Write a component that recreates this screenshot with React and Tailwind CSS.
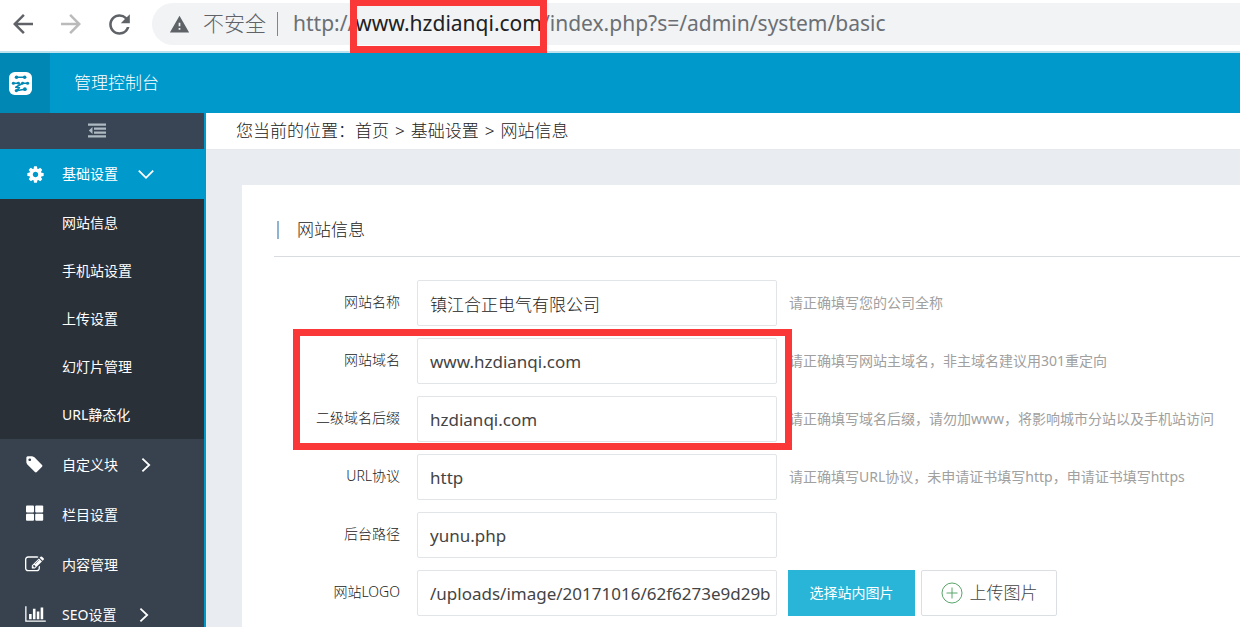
import { useState } from 'react'
import { MdArrowBack, MdArrowForward, MdRefresh, MdWarning } from 'react-icons/md'

const SUB_MENU = ['网站信息', '手机站设置', '上传设置', '幻灯片管理', 'URL静态化']

const MENU = [
  { label: '自定义块', icon: TagIcon,   more: true },
  { label: '栏目设置', icon: GridIcon,  more: false },
  { label: '内容管理', icon: EditIcon,  more: false },
  { label: 'SEO设置',  icon: ChartIcon, more: true },
]

const CRUMBS = ['首页', '基础设置', '网站信息']

function CogIcon() {
  return (
    <svg className="h-[19px] w-[19px]" viewBox="0 0 1792 1792" fill="currentColor">
      <path d="M1152 896q0-106-75-181t-181-75-181 75-75 181 75 181 181 75 181-75 75-181zm512-109v222q0 12-8 23t-20 13l-185 28q-19 54-39 91 35 50 107 138 10 12 10 25t-9 23q-27 37-99 108t-94 71q-12 0-26-9l-138-108q-44 23-91 38-16 136-29 186-7 28-36 28h-222q-14 0-24.5-8.5t-11.5-21.5l-28-184q-49-16-90-37l-141 107q-10 9-25 9-14 0-25-11-126-114-165-168-7-10-7-23 0-12 8-23 15-21 51-66.5t54-70.5q-27-50-41-99l-183-27q-13-2-21-12.5t-8-23.5v-222q0-12 8-23t19-13l186-28q14-46 39-92-40-57-107-138-10-12-10-24 0-10 9-23 26-36 98.5-107.5t94.5-71.5q13 0 26 10l138 107q44-23 91-38 16-136 29-186 7-28 36-28h222q14 0 24.5 8.5t11.5 21.5l28 184q49 16 90 37l142-107q9-9 24-9 13 0 25 10 129 119 165 170 7 8 7 22 0 12-8 23-15 21-51 66.5t-54 70.5q26 50 41 98l183 28q13 2 21 12.5t8 23.5z"/>
    </svg>
  )
}

function TagIcon() {
  return (
    <svg className="h-[19px] w-[19px]" viewBox="0 0 1792 1792" fill="currentColor">
      <path d="M576 448q0-53-37.5-90.5t-90.5-37.5-90.5 37.5-37.5 90.5 37.5 90.5 90.5 37.5 90.5-37.5 37.5-90.5zm1067 576q0 53-37 90l-491 492q-39 37-91 37-53 0-90-37l-715-716q-38-37-64.5-101t-26.5-117v-416q0-52 38-90t90-38h416q53 0 117 26.5t102 64.5l715 714q37 39 37 91z"/>
    </svg>
  )
}

function GridIcon() {
  return (
    <svg className="h-[19px] w-[19px]" viewBox="0 0 19 19" fill="currentColor">
      <rect x="1" y="0.5" width="8" height="7" rx="1"/>
      <rect x="10.2" y="0.5" width="8" height="7" rx="1"/>
      <rect x="1" y="8.7" width="8" height="7" rx="1"/>
      <rect x="10.2" y="8.7" width="8" height="7" rx="1"/>
    </svg>
  )
}

function EditIcon() {
  return (
    <svg className="h-[19px] w-[19px]" viewBox="0 0 1792 1792" fill="currentColor">
      <path d="M888 1184l116-116-152-152-116 116v56h96v96h56zm440-720q-16-16-33 1l-350 350q-17 17-1 33t33-1l350-350q17-17 1-33zm80 594v190q0 119-84.5 203.5t-203.5 84.5h-832q-119 0-203.5-84.5t-84.5-203.5v-832q0-119 84.5-203.5t203.5-84.5h832q63 0 117 25 15 7 18 23 3 17-9 29l-49 49q-14 14-32 8-23-6-45-6h-832q-66 0-113 47t-47 113v832q0 66 47 113t113 47h832q66 0 113-47t47-113v-126q0-13 9-22l64-64q15-15 35-7t20 29zm-96-738l288 288-672 672h-288v-288zm444 132l-92 92-288-288 92-92q28-28 68-28t68 28l152 152q28 28 28 68t-28 68z"/>
    </svg>
  )
}

function ChartIcon() {
  return (
    <svg className="h-[18px] w-[21px]" viewBox="0 0 2048 1792" fill="currentColor">
      <path d="M640 896v512h-256v-512h256zm384-512v1024h-256v-1024h256zm1024 1152v128h-2048v-1536h128v1408h1920zm-640-896v768h-256v-768h256zm384-384v1152h-256v-1152h256z"/>
    </svg>
  )
}

function OutdentIcon() {
  return (
    <svg className="h-[15px] w-[18px]" viewBox="0 0 18 15" fill="currentColor">
      <path d="M0 0.5h18v2.3H0zM6 4.4h12v2.3H6zM6 8.4h12v2.3H6zM0 12.3h18v2.3H0zM4.5 4v7L0.8 7.5z"/>
    </svg>
  )
}

function LogoIcon() {
  return (
    <svg className="h-[23px] w-[23px]" viewBox="0 0 22 22">
      <rect width="22" height="22" rx="5.5" fill="#fff"/>
      <g fill="none" stroke="#0087b4" strokeWidth="1.5" strokeLinecap="round" strokeLinejoin="round">
        <path d="M7 5h8M4 10.8h5.5M13 10.8h5M13 10.8L6.5 14.6M6.5 14.6L10 15L7 18L15 16.4"/>
      </g>
      <g fill="#0087b4">
        <circle cx="7.2" cy="5" r="1.7"/>
        <circle cx="15" cy="5" r="1.7"/>
        <circle cx="4.2" cy="10.8" r="1.5"/>
        <circle cx="9" cy="10.8" r="1.4"/>
        <circle cx="13" cy="10.8" r="1.4"/>
        <circle cx="17.8" cy="10.8" r="1.5"/>
        <circle cx="7" cy="17.8" r="1.5"/>
        <circle cx="15.2" cy="16.4" r="1.8"/>
      </g>
    </svg>
  )
}

function Chevron({ open }) {
  return (
    <svg className="h-4 w-4" viewBox="0 0 16 16" fill="none" stroke="currentColor" strokeWidth="1.8">
      <path d={open ? 'M0.8 4.6L8 11.8L15.2 4.6' : 'M4.4 1.6L11.2 8L4.4 14.4'}/>
    </svg>
  )
}

function Field({ id, label, value, hint, onChange, children }) {
  return (
    <div className="flex items-center whitespace-nowrap">
      <label htmlFor={id} className="mr-[17px] w-[126px] shrink-0 pb-0.5 text-right text-sm text-[#222]">{label}</label>
      <input
        id={id}
        type="text"
        value={value}
        onChange={e => onChange(id, e.target.value)}
        className={`h-[46px] w-[360px] shrink-0 rounded-xs border border-[#e2e5e7] bg-white pl-3 text-[17px] outline-none ${id === 'name' ? 'font-light text-[#222]' : 'font-normal text-[#444]'}`}
      />
      {hint && <span className="ml-3 text-sm font-normal text-[#a0a0a0]">{hint}</span>}
      {children}
    </div>
  )
}

export default function App() {
  const [open, setOpen] = useState(true)
  const [form, setForm] = useState({
    name: '镇江合正电气有限公司',
    domain: 'www.hzdianqi.com',
    suffix: 'hzdianqi.com',
    protocol: 'http',
    path: 'yunu.php',
    logo: '/uploads/image/20171016/62f6273e9d29b',
  })

  function handleChange(id, value) {
    setForm({ ...form, [id]: value })
  }

  return (
    <div className="flex h-screen flex-col overflow-hidden bg-white font-['Noto_Sans','Noto_Sans_CJK_SC',sans-serif] font-light">

      {/* ── Browser bar ── */}
      <div className="flex h-[53px] shrink-0 items-start border-b-2 border-[#bfe3ee] pt-[3px] text-[#5f6368]">
        <div className="flex h-[42px] w-[152px] shrink-0 items-center gap-[18px] pl-2">
          <button aria-label="后退"><MdArrowBack size={30}/></button>
          <button aria-label="前进" className="text-[#bababa]"><MdArrowForward size={30}/></button>
          <button aria-label="刷新"><MdRefresh size={31}/></button>
        </div>
        <div className="flex h-[42px] min-w-0 flex-1 items-center rounded-l-full bg-[#f1f3f4] pl-[17px] text-[21px] whitespace-nowrap">
          <MdWarning size={21} className="mr-[13px] shrink-0"/>
          <span>不安全</span>
          <span className="mr-[15px] ml-[11px] h-6 w-px bg-[#80868b]"/>
          <div className="font-normal text-[#6b6f74]">
            http://
            <span className="relative text-[#202124]">
              www.hzdianqi.com
              <span className="absolute -inset-x-[5px] -top-[10px] -bottom-4 border-[7px] border-[#fb3838]"/>
            </span>
            /index.php?s=/admin/system/basic
          </div>
        </div>
      </div>

      {/* ── Header ── */}
      <header className="flex h-[60px] shrink-0 items-center bg-[#0099cc] text-white">
        <a href="#" aria-label="首页" className="flex h-full w-[50px] items-center bg-[#0087b4] pl-[9px]"><LogoIcon/></a>
        <h1 className="pl-6 text-[17px]">管理控制台</h1>
      </header>

      <div className="flex min-h-0 flex-1">

        {/* ── Sidebar ── */}
        <nav className="w-[206px] shrink-0 overflow-hidden border-r-2 border-[#0099cc] bg-[#37424e] text-sm font-normal text-white">
          <button aria-label="收起" className="flex h-9 w-full items-center justify-center bg-[#394555] pr-[10px] pb-0.5 text-[#aeb9c2]">
            <OutdentIcon/>
          </button>
          <button
            onClick={() => setOpen(!open)}
            className="flex h-[50px] w-full items-center bg-[#0099cc]"
          >
            <span className="flex w-[62px] pl-[26px]"><CogIcon/></span>
            <span className="mr-5">基础设置</span>
            <Chevron open={open}/>
          </button>
          {open && (
            <ul className="bg-[#2a3038]">
              {SUB_MENU.map(s => (
                <li key={s}>
                  <a href="#" className="flex h-12 items-center pl-[62px]">{s}</a>
                </li>
              ))}
            </ul>
          )}
          <div className="pt-px">
            {MENU.map(({ label, icon: Icon, more }) => (
              <a key={label} href="#" className="flex h-[50px] items-center">
                <span className="flex w-[62px] pb-0.5 pl-[25px]"><Icon/></span>
                <span className="mr-5">{label}</span>
                {more && <Chevron/>}
              </a>
            ))}
          </div>
        </nav>

        {/* ── Content ── */}
        <main className="min-w-0 flex-1 overflow-hidden bg-[#e9ecf0]">
          <div className="flex h-[37px] items-center border-b border-[#e6e9ec] bg-white pl-[30px] text-[17px] text-[#222]">
            <span>您当前的位置：</span>
            <ol className="flex gap-[6px]">
              {CRUMBS.map((c, i) => (
                <li key={c} className="flex gap-[6px]">
                  {i > 0 && <span>&gt;</span>}
                  <a href="#">{c}</a>
                </li>
              ))}
            </ol>
          </div>

          <section className="mt-[35px] ml-9 h-full bg-white pt-5 pl-8">
            <div className="flex h-[52px] items-center border-b border-[#d9dcdf] pb-[2px] pl-[3px]">
              <span className="mr-[18px] h-[18px] w-[2px] bg-[#8db4d2]"/>
              <h2 className="text-[17px] text-[#222]">网站信息</h2>
            </div>

            <form className="flex flex-col gap-3 pt-[23px]" onSubmit={e => e.preventDefault()}>
              <Field id="name" label="网站名称" value={form.name} hint="请正确填写您的公司全称" onChange={handleChange}/>
              <div className="relative flex flex-col gap-3">
                <Field id="domain" label="网站域名" value={form.domain} hint="请正确填写网站主域名，非主域名建议用301重定向" onChange={handleChange}/>
                <Field id="suffix" label="二级域名后缀" value={form.suffix} hint="请正确填写域名后缀，请勿加www，将影响城市分站以及手机站访问" onChange={handleChange}/>
                <span className="pointer-events-none absolute -top-[9px] -bottom-2 left-[19px] w-[499px] border-[7px] border-[#fb3838]"/>
              </div>
              <Field id="protocol" label="URL协议" value={form.protocol} hint="请正确填写URL协议，未申请证书填写http，申请证书填写https" onChange={handleChange}/>
              <Field id="path" label="后台路径" value={form.path} onChange={handleChange}/>
              <Field id="logo" label="网站LOGO" value={form.logo} onChange={handleChange}>
                <button className="ml-[11px] h-[46px] w-[127px] bg-[#28b5d8] text-sm font-normal text-white">选择站内图片</button>
                <button className="ml-[6px] flex h-[46px] w-[136px] items-center justify-center rounded-xs border border-[#dcdfe2] bg-white text-[17px] text-[#444]">
                  <svg className="mr-[7px] h-[22px] w-[22px]" viewBox="0 0 22 22" fill="none" stroke="#5aa56b">
                    <circle cx="11" cy="11" r="10"/>
                    <path d="M11 5.5v11M5.5 11h11"/>
                  </svg>
                  上传图片
                </button>
              </Field>
            </form>
          </section>
        </main>
      </div>
    </div>
  )
}
